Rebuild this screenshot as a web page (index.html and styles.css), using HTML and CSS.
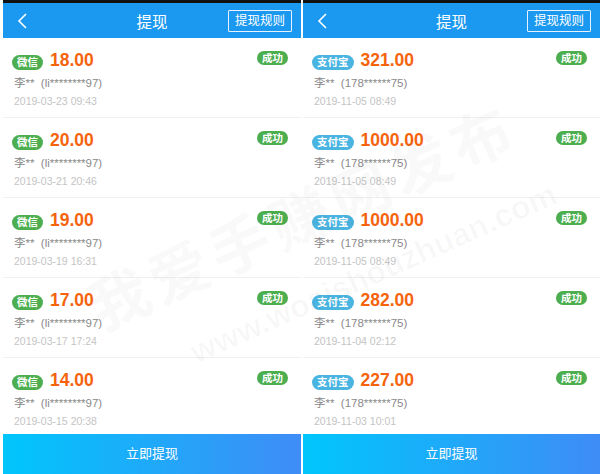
FILE: index.html
```html
<!DOCTYPE html>
<html lang="zh">
<head>
  <meta charset="UTF-8" />
  <title>提现</title>
  <link rel="stylesheet" href="styles.css">
</head>
<body>
  <div class="screens">
    <div class="phone left">
      <div class="statusbar"></div>
      <div class="header">
        <svg class="back" width="10" height="16" viewBox="0 0 10 16"><path d="M9 1 L2 8 L9 15" fill="none" stroke="#fff" stroke-width="1.6"/></svg>
        <span class="title">提现</span>
        <span class="rule">提现规则</span>
      </div>
      <div class="list">
        <div class="row">
          <div class="line1"><span class="tag wx">微信</span><span class="amount">18.00</span><span class="ok">成功</span></div>
          <div class="name">李**&nbsp; (li********97)</div>
          <div class="date">2019-03-23 09:43</div>
        </div>
        <div class="row">
          <div class="line1"><span class="tag wx">微信</span><span class="amount">20.00</span><span class="ok">成功</span></div>
          <div class="name">李**&nbsp; (li********97)</div>
          <div class="date">2019-03-21 20:46</div>
        </div>
        <div class="row">
          <div class="line1"><span class="tag wx">微信</span><span class="amount">19.00</span><span class="ok">成功</span></div>
          <div class="name">李**&nbsp; (li********97)</div>
          <div class="date">2019-03-19 16:31</div>
        </div>
        <div class="row">
          <div class="line1"><span class="tag wx">微信</span><span class="amount">17.00</span><span class="ok">成功</span></div>
          <div class="name">李**&nbsp; (li********97)</div>
          <div class="date">2019-03-17 17:24</div>
        </div>
        <div class="row">
          <div class="line1"><span class="tag wx">微信</span><span class="amount">14.00</span><span class="ok">成功</span></div>
          <div class="name">李**&nbsp; (li********97)</div>
          <div class="date">2019-03-15 20:38</div>
        </div>
      </div>
      <div class="submit">立即提现</div>
    </div>

    <div class="phone right">
      <div class="statusbar"></div>
      <div class="header">
        <svg class="back" width="10" height="16" viewBox="0 0 10 16"><path d="M9 1 L2 8 L9 15" fill="none" stroke="#fff" stroke-width="1.6"/></svg>
        <span class="title">提现</span>
        <span class="rule">提现规则</span>
      </div>
      <div class="list">
        <div class="row">
          <div class="line1"><span class="tag ali">支付宝</span><span class="amount">321.00</span><span class="ok">成功</span></div>
          <div class="name">李**&nbsp; (178******75)</div>
          <div class="date">2019-11-05 08:49</div>
        </div>
        <div class="row">
          <div class="line1"><span class="tag ali">支付宝</span><span class="amount">1000.00</span><span class="ok">成功</span></div>
          <div class="name">李**&nbsp; (178******75)</div>
          <div class="date">2019-11-05 08:49</div>
        </div>
        <div class="row">
          <div class="line1"><span class="tag ali">支付宝</span><span class="amount">1000.00</span><span class="ok">成功</span></div>
          <div class="name">李**&nbsp; (178******75)</div>
          <div class="date">2019-11-05 08:49</div>
        </div>
        <div class="row">
          <div class="line1"><span class="tag ali">支付宝</span><span class="amount">282.00</span><span class="ok">成功</span></div>
          <div class="name">李**&nbsp; (178******75)</div>
          <div class="date">2019-11-04 02:12</div>
        </div>
        <div class="row">
          <div class="line1"><span class="tag ali">支付宝</span><span class="amount">227.00</span><span class="ok">成功</span></div>
          <div class="name">李**&nbsp; (178******75)</div>
          <div class="date">2019-11-03 10:01</div>
        </div>
      </div>
      <div class="submit">立即提现</div>
    </div>
  </div>

  <div class="watermark">
    <div class="wm-big">我爱手赚网发布</div>
    <div class="wm-url">www.woaishouzhuan.com</div>
  </div>
</body>
</html>
```

FILE: styles.css
```css
body {
  margin: 0;
  width: 600px;
  height: 474px;
  overflow: hidden;
  background: #fff;
  font-family: 'Liberation Sans', 'Noto Sans CJK SC', sans-serif;
  position: relative;
}
.screens {
  display: flex;
  gap: 2px;
  padding-left: 3px;
  height: 474px;
}
.phone {
  display: flex;
  flex-direction: column;
  height: 474px;
  overflow: hidden;
}
.phone.left {
  width: 298px;
}
.phone.right {
  flex: 1;
}
.statusbar {
  height: 3px;
  background: #111;
  flex: none;
}
.header {
  height: 35px;
  flex: none;
  background: #1b99f0;
  display: flex;
  align-items: center;
  justify-content: space-between;
  padding: 0 9px 0 14px;
  position: relative;
}
.back {
  display: block;
}
.title {
  position: absolute;
  left: 0;
  right: 0;
  text-align: center;
  color: #fff;
  font-size: 15.5px;
  pointer-events: none;
}
.rule {
  border: 1px solid #e6f3fe;
  color: #fff;
  font-size: 12.5px;
  height: 20px;
  line-height: 20px;
  padding: 0 6px;
  border-radius: 1px;
}
.list {
  flex: 1;
  overflow: hidden;
}
.row {
  height: 80px;
  border-bottom: 1px solid #f0f0f0;
  padding: 14px 13px 0 9px;
  box-sizing: border-box;
}
.line1 {
  display: flex;
  align-items: center;
  height: 17px;
}
.tag {
  color: #fff;
  font-size: 10.5px;
  font-weight: bold;
  height: 15px;
  line-height: 15px;
  border-radius: 8px;
  padding: 0 5px;
  margin-top: 3px;
}
.tag.wx {
  background: #4cae4f;
}
.tag.ali {
  background: #4bb5e2;
}
.amount {
  color: #f5640c;
  font-size: 17.5px;
  font-weight: bold;
  margin-left: 7px;
}
.ok {
  margin-left: auto;
  background: #4cae4f;
  color: #fff;
  font-size: 10.5px;
  font-weight: bold;
  height: 14px;
  line-height: 14px;
  padding: 0 5px;
  border-radius: 7px;
  margin-top: -6px;
}
.name {
  margin-top: 6px;
  color: #8a8a8a;
  font-size: 11.5px;
  height: 16px;
  line-height: 16px;
  padding-left: 2px;
}
.date {
  margin-top: 3px;
  color: #c4c4c4;
  font-size: 10.5px;
  height: 14px;
  line-height: 14px;
  padding-left: 2px;
}
.submit {
  height: 40px;
  flex: none;
  background: linear-gradient(90deg, #00c6fc, #3f8cf6);
  color: #fff;
  font-size: 13px;
  text-align: center;
  line-height: 40px;
}
.watermark {
  position: absolute;
  left: 0;
  top: 0;
  width: 600px;
  height: 474px;
  pointer-events: none;
}
.wm-big {
  position: absolute;
  left: 70px;
  top: 170px;
  font-size: 60px;
  font-weight: bold;
  color: rgba(0, 0, 0, 0.025);
  transform: rotate(-24deg);
  white-space: nowrap;
  letter-spacing: 6px;
}
.wm-url {
  position: absolute;
  left: 175px;
  top: 255px;
  font-size: 32px;
  font-weight: bold;
  color: rgba(0, 0, 0, 0.03);
  transform: rotate(-24deg);
  white-space: nowrap;
}
```
